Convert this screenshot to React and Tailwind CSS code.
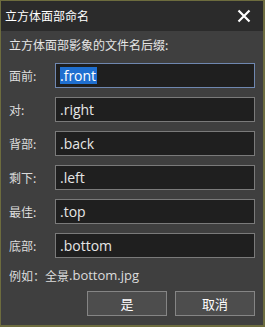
import React from "react";

const fields = [
  { label: "面前:", value: ".front", selected: true },
  { label: "对:", value: ".right" },
  { label: "背部:", value: ".back" },
  { label: "剩下:", value: ".left" },
  { label: "最佳:", value: ".top" },
  { label: "底部:", value: ".bottom" },
];

const latin = { fontFamily: '"Open Sans", "Noto Sans", sans-serif' };

export default function App() {
  return (
    <div
      className="w-[265px] h-[327px] border border-r-2 border-b-2 border-[#6d6c3e] bg-[#3f3f3f] flex flex-col text-[#e6e6e6]"
      style={{ fontFamily: '"Noto Sans CJK SC", "Noto Sans", sans-serif' }}
    >
      {/* Title bar */}
      <div className="h-[30px] bg-[#2b2b2b] flex items-center justify-between pl-[4px] pr-[12px]">
        <span className="text-[12px] text-white leading-none">立方体面部命名</span>
        <svg width="14" height="14" viewBox="0 0 14 14">
          <path d="M1.5 1.5 L12.5 12.5 M12.5 1.5 L1.5 12.5" stroke="#fff" strokeWidth="2.2" />
        </svg>
      </div>

      {/* Body */}
      <div className="flex flex-col pl-[8px] pr-[8px] pt-[7px]">
        <div className="text-[12px] leading-[14px] h-[25px]">立方体面部影象的文件名后缀:</div>
        <div className="flex flex-col gap-[9px]">
          {fields.map((f) => (
            <div key={f.label} className="flex items-center h-[25px]">
              <span className="w-[46px] text-[12px] text-[#dcdcdc]">{f.label}</span>
              <div
                className={`flex-1 h-[25px] bg-[#1f1f1f] border flex items-center px-[4px] text-[14px] ${
                  f.selected ? "border-[#6f87b0]" : "border-[#7a7a7a]"
                }`}
                style={latin}
              >
                {f.selected ? (
                  <span className="bg-[#1f6fd0] text-white leading-[17px] pr-[1px]">{f.value}</span>
                ) : (
                  <span className="text-[#e6e6e6]">{f.value}</span>
                )}
              </div>
            </div>
          ))}
        </div>
        <div className="mt-[8px] text-[12px] text-[#dcdcdc] h-[20px] flex items-center">
          例如：全景<span className="text-[13px]" style={latin}>.bottom.jpg</span>
        </div>
        <div className="flex justify-end gap-[8px] mt-[5px]">
          <button className="w-[80px] h-[25px] bg-[#4d4d4d] border border-[#858585] text-[13px] text-white">是</button>
          <button className="w-[80px] h-[25px] bg-[#4d4d4d] border border-[#858585] text-[13px] text-white">取消</button>
        </div>
      </div>
    </div>
  );
}
